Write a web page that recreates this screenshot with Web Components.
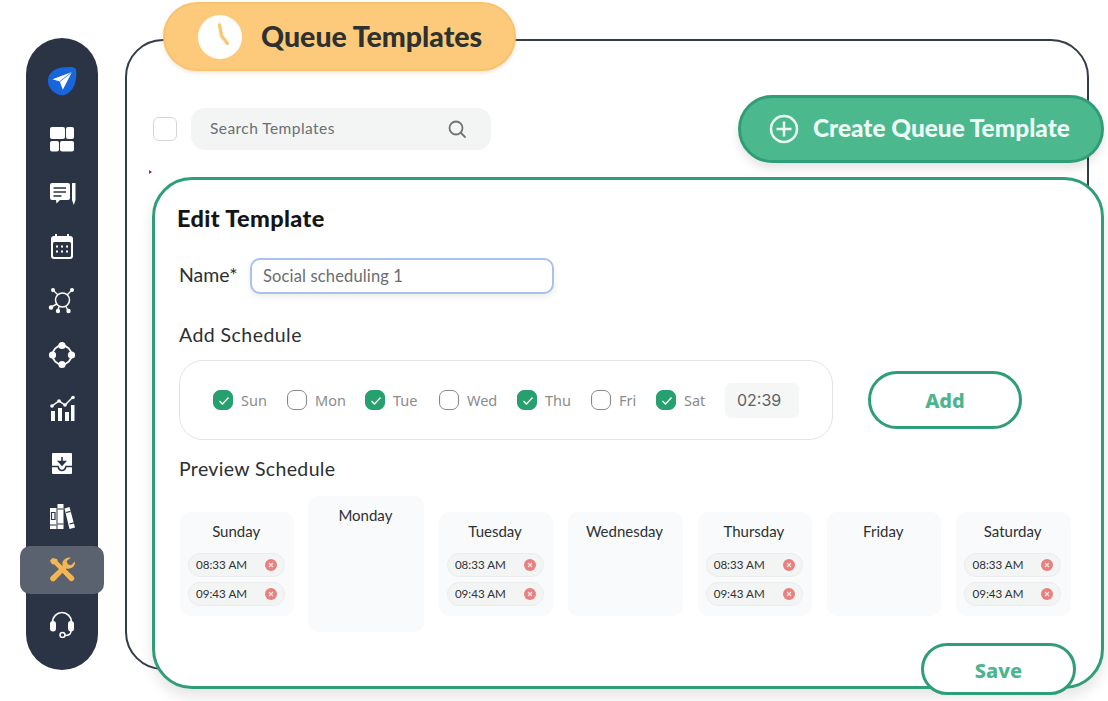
<!DOCTYPE html>
<html lang="en"><head><meta charset="utf-8"><title>Queue Templates</title>
<style>
html,body{margin:0;padding:0;background:#fff}
body{width:1108px;height:701px;overflow:hidden;font-family:"Lato","Liberation Sans",sans-serif}
</style></head><body>
<app-shell>
  <app-sidebar slot="nav">
    <side-item lead><svg width="30" height="30" viewBox="0 0 30 30"><path d="M15 1.500C20 .8 27 .2 28.800 2.800 30 7 29.200 15 27 20 24.600 25.500 19 29.500 15 29.300 10 29 4 25 1.800 19.500.2 15.500.8 11 3 8 6 4 10 2.200 15 1.500Z" fill="#1766dc"/><path d="M25 6 5.500 13.200l7.300 2.400 3 8.200z" fill="#fff"/><path d="M25 6 12.800 15.600" stroke="#1766dc" stroke-width=".8"/></svg></side-item>
    <side-item><svg width="28" height="28" viewBox="0 0 28 28" fill="#fff"><rect x="2" y="1" width="15" height="12" rx="2"/><rect x="18" y="1" width="8" height="12" rx="2"/><rect x="2" y="15" width="9" height="10.500" rx="2"/><rect x="12" y="15" width="14" height="10.500" rx="2"/></svg></side-item>
    <side-item><svg width="28" height="28" viewBox="0 0 28 28"><path d="M4 3h16a2 2 0 0 1 2 2v13a2 2 0 0 1-2 2h-8l-3.500 3.500L8 20H4a2 2 0 0 1-2-2V5a2 2 0 0 1 2-2Z" fill="#fff"/><path d="M5.500 8h12.500M5.500 12h12.500M5.500 16h8" stroke="#2b3445" stroke-width="1.500"/><path d="M24 3h3.500v17L25.750 25 24 20z" fill="#fff"/></svg></side-item>
    <side-item><svg width="28" height="28" viewBox="0 0 28 28"><rect x="3" y="3" width="22" height="23" rx="3" fill="#fff"/><rect x="7" y="1" width="2" height="4" fill="#fff"/><rect x="19" y="1" width="2" height="4" fill="#fff"/><rect x="5" y="9" width="18" height="15" rx="1.500" fill="#2b3445"/><g fill="#fff"><rect x="8" y="12.500" width="2" height="2"/><rect x="13" y="12.500" width="2" height="2"/><rect x="18" y="12.500" width="2" height="2"/><rect x="8" y="17.500" width="2" height="2"/><rect x="13" y="17.500" width="2" height="2"/><rect x="18" y="17.500" width="2" height="2"/></g></svg></side-item>
    <side-item><svg width="28" height="28" viewBox="0 0 28 28" fill="#fff" stroke="#fff"><circle cx="14.500" cy="13" r="7" fill="none" stroke-width="1.500"/><path d="M5 3l5 5M24 3l-5 5M3 20l6-3M11 19.500l-1 3.500M18 19.500l2 4" fill="none" stroke-width="1.400"/><g stroke="none"><circle cx="5" cy="3" r="2"/><circle cx="24" cy="3" r="2"/><circle cx="3" cy="20.500" r="2.200"/><circle cx="10" cy="24" r="2.200"/><circle cx="20.500" cy="24" r="2.200"/></g></svg></side-item>
    <side-item><svg width="28" height="28" viewBox="0 0 28 28" fill="#fff" style="margin-top:-1px"><circle cx="14" cy="14" r="9.500" fill="none" stroke="#fff" stroke-width="1.800"/><circle cx="14" cy="4.500" r="3.600"/><circle cx="4.500" cy="14" r="3.600"/><circle cx="23.500" cy="14" r="3.600"/><circle cx="14" cy="23.500" r="3.600"/></svg></side-item>
    <side-item><svg width="28" height="28" viewBox="0 0 28 28" fill="#fff"><rect x="3" y="16" width="4" height="10"/><rect x="10" y="13" width="4" height="13"/><rect x="17" y="17" width="4" height="9"/><rect x="23" y="10" width="3.500" height="16"/><path d="M4 11l7-5 6 4 8-8" fill="none" stroke="#fff" stroke-width="1.500"/><circle cx="4" cy="11" r="1.800"/><circle cx="11" cy="6" r="1.800"/><circle cx="17" cy="10" r="1.800"/><circle cx="25" cy="2.500" r="1.800"/></svg></side-item>
    <side-item><svg width="28" height="28" viewBox="0 0 28 28"><path d="M4 5a1 1 0 0 1 1-1h18a1 1 0 0 1 1 1v19a1 1 0 0 1-1 1H5a1 1 0 0 1-1-1z" fill="#fff"/><path d="M4 17.500h6c.8 3 2 4 4 4s3.200-1 4-4h6" fill="none" stroke="#2b3445" stroke-width="1.600"/><path d="M14 8v7M10.800 12.500 14 16l3.200-3.500z" stroke="#2b3445" stroke-width="1.600" fill="#2b3445"/></svg></side-item>
    <side-item><svg width="28" height="28" viewBox="0 0 28 28" fill="#fff"><rect x="2" y="6" width="6.500" height="21"/><rect x="9.500" y="2" width="6" height="25"/><path d="M16.500 6.500 21.500 5l5.500 20.500-5.500 1.500z"/><path d="M3.500 10.500h3.500v7H3.500zM2 23h6.500M9.500 7h6M9.500 22h6M18 10.500l4.500-1.200M21.500 22l4.500-1.200" fill="none" stroke="#2b3445" stroke-width="1.200"/></svg></side-item>
    <side-item active><svg width="28" height="28" viewBox="0 0 28 28" fill="#f4b654"><path d="M4.500 2 2 4.500l1.800 3.400 3 .8L21.500 24.200a2.700 2.700 0 0 0 4-3.800L10 5.800 9 3z"/><path d="M21 1.500a6.500 6.500 0 0 0-6.400 8.200L3 20.500a2.900 2.900 0 0 0 4.100 4.100L18.500 12.400A6.500 6.500 0 0 0 27 5.500l-4 3.800-3.300-1-1-3.200L22.800 1.800z"/></svg></side-item>
    <side-item><svg width="28" height="28" viewBox="0 0 28 28" style="margin-top:-1px"><path d="M4.500 15v-3a9.500 9.500 0 0 1 19 0v3" fill="none" stroke="#fff" stroke-width="1.700"/><rect x="2" y="11" width="6" height="10.500" rx="3" fill="#fff"/><rect x="20" y="11" width="6" height="10.500" rx="3" fill="#fff"/><path d="M23 21c0 3-2.500 4.500-6 4.500" fill="none" stroke="#fff" stroke-width="1.500"/><circle cx="14.500" cy="25" r="2.500" fill="#2b3445" stroke="#fff" stroke-width="1.500"/></svg></side-item>
  </app-sidebar>
  <title-pill>Queue Templates</title-pill>
  <tool-bar>
    <search-box>Search Templates</search-box>
    <create-button>Create Queue Template</create-button>
  </tool-bar>
  <edit-panel>
    <name-field value="Social scheduling 1"></name-field>
    <schedule-row>
      <day-check checked style="--w:74px">Sun</day-check><day-check style="--w:78px">Mon</day-check><day-check checked style="--w:74px">Tue</day-check><day-check style="--w:78px">Wed</day-check><day-check checked style="--w:74px">Thu</day-check><day-check style="--w:65px">Fri</day-check><day-check checked style="--w:69px">Sat</day-check>
      <time-box slot="time">02:39</time-box>
    </schedule-row>
    <preview-row>
      <day-card name="Sunday"><time-chip>08:33 AM</time-chip><time-chip>09:43 AM</time-chip></day-card>
      <day-card name="Monday" tall></day-card>
      <day-card name="Tuesday"><time-chip>08:33 AM</time-chip><time-chip>09:43 AM</time-chip></day-card>
      <day-card name="Wednesday"></day-card>
      <day-card name="Thursday"><time-chip>08:33 AM</time-chip><time-chip>09:43 AM</time-chip></day-card>
      <day-card name="Friday"></day-card>
      <day-card name="Saturday"><time-chip>08:33 AM</time-chip><time-chip>09:43 AM</time-chip></day-card>
    </preview-row>
  </edit-panel>
</app-shell>
<script>
function def(name, css, html){
  customElements.define(name, class extends HTMLElement{
    constructor(){super();const r=this.attachShadow({mode:'open'});
      r.innerHTML='<style>'+css+'</style>'+(typeof html==='function'?html(this):html);}
  });
}
const LATO='"Lato","Liberation Sans",sans-serif', NOTO='"Noto Sans","Liberation Sans",sans-serif';
def('app-shell',`:host{display:flex;width:1108px;height:701px;box-sizing:border-box;padding-left:26px}
.main{position:relative;margin-left:54px;width:952px;display:flex;flex-direction:column;align-items:flex-start}
.frame{position:absolute;left:-27px;top:39px;width:964px;height:631px;box-sizing:border-box;border:2px solid #343b4a;border-radius:38px}
.mark{position:absolute;left:-3px;top:170px;width:0;height:0;border-left:3px solid #c4122f;border-top:2px solid transparent;border-bottom:2px solid transparent}
::slotted(title-pill),::slotted(tool-bar),::slotted(edit-panel){position:relative}`,
`<slot name="nav"></slot><div class="main"><div class="frame"></div><div class="mark"></div><slot></slot></div>`);
def('app-sidebar',`:host{display:flex;flex-direction:column;flex:none;width:72px;height:632px;margin-top:38px;box-sizing:border-box;padding-top:16px;background:#2b3445;border-radius:36px}`,`<slot></slot>`);
def('side-item',`:host{display:flex;height:53.8px;align-items:center;justify-content:center}
:host([lead]){margin-bottom:5.2px}
.b{flex:none;width:84px;height:48px;display:flex;align-items:center;justify-content:center;border-radius:10px}
:host([active]) .b{background:#5a6270}
::slotted(svg){display:block}`,`<div class="b"><slot></slot></div>`);
def('title-pill',`:host{display:flex;align-items:center;box-sizing:border-box;margin:2px 0 0 11px;width:353px;height:69px;padding-left:33px;background:#fdca7b;border:2px solid #f8c36c;border-radius:35px;box-shadow:0 2px 4px rgba(200,160,90,.25);font:900 28.500px ${LATO};color:#2e312f}
.c{width:44px;height:44px;border-radius:50%;background:#fff;margin-right:19px;flex:none}
span{padding-bottom:1px}
svg{display:block}`,`<div class="c"><svg width="44" height="44" viewBox="0 0 44 44"><path d="M21.500 10l2.200 11 5.600 7.300" fill="none" stroke="#f8c878" stroke-width="3.500" stroke-linecap="round" stroke-linejoin="round"/></svg></div><span><slot></slot></span>`);
def('tool-bar',`:host{display:flex;align-items:center;width:952px;margin-top:24px}
.cb{width:24px;height:24px;box-sizing:border-box;border:1.500px solid #d4d6d6;border-radius:6px;background:#fff;margin:0 14px 0 1px;flex:none}`,`<div class="cb"></div><slot></slot>`);
def('search-box',`:host{display:flex;align-items:center;justify-content:space-between;box-sizing:border-box;width:300px;height:42px;margin-right:247px;padding:0 24px 0 19px;background:#f3f5f5;border-radius:14px;font:400 15.500px ${LATO};color:#6b6f72;letter-spacing:.45px}
span{padding-bottom:3px}
svg{display:block}`,`<span><slot></slot></span><svg width="20" height="20" viewBox="0 0 20 20" fill="none" stroke="#6f7376" stroke-width="1.800"><circle cx="9" cy="9" r="6.500"/><path d="M14 14l4 4" stroke-linecap="round"/></svg>`);
def('create-button',`:host{display:flex;align-items:center;box-sizing:border-box;width:366px;height:68px;padding-left:28px;background:#4bb98d;border:3px solid #2f9e78;border-radius:34px;box-shadow:0 6px 10px rgba(0,0,0,.1);font:900 24.400px ${LATO};color:#ecfbf5}
span{padding-bottom:3px}
svg{display:block;margin:0 14px 1px 0}`,`<svg width="30" height="30" viewBox="0 0 30 30" fill="none" stroke="#ecfbf5" stroke-width="2.500"><circle cx="15" cy="15" r="13"/><path d="M15 7.500v15M7.500 15h15"/></svg><span><slot></slot></span>`);
def('edit-panel',`:host{display:block;box-sizing:border-box;width:952px;height:512px;margin-top:14px;padding:24px 0 0 22px;background:#fff;border:3px solid #2f9e78;border-radius:40px;box-shadow:0 8px 14px rgba(0,0,0,.1)}
h2{margin:0;font:900 23.500px/28px ${LATO};color:#151515;letter-spacing:.38px}`,
`<h2>Edit Template</h2><slot></slot>`);
def('name-field',`:host{display:flex;align-items:center;margin:26px 0 0 2px;height:36px}
.l{font:400 19.500px ${LATO};color:#2c2f31;width:71px;padding-bottom:3px}
.i{box-sizing:border-box;width:304px;height:36px;display:flex;align-items:center;padding-left:11px;border:2px solid #a9c2ea;border-radius:10px;background:#fff;box-shadow:0 3px 6px rgba(0,0,0,.08);font:400 16.500px ${LATO};color:#6a6d70;letter-spacing:.15px}`,
h=>`<span class="l">Name*</span><div class="i">${h.getAttribute('value')||''}</div>`);
def('schedule-row',`:host{display:block;margin-left:2px}
h3{margin:29px 0 13px;font:400 19.500px/24px ${LATO};color:#2c2f31;letter-spacing:.45px}
.r{display:flex;align-items:center}
.box{box-sizing:border-box;width:654px;height:80px;display:flex;align-items:center;padding-left:33px;border:1.500px solid #e2e3e3;border-radius:24px}
.add{box-sizing:border-box;width:154px;height:58px;margin-left:35px;display:flex;align-items:center;justify-content:center;border:3px solid #2f9e78;border-radius:29px;font:800 20px ${NOTO};color:#4db58e}`,
`<h3>Add Schedule</h3><div class="r"><div class="box"><slot></slot><slot name="time"></slot></div><div class="add">Add</div></div>`);
def('day-check',`:host{display:flex;align-items:center;box-sizing:border-box;width:var(--w,74px);font:400 14.500px ${NOTO};color:#8a8c8e}
.c{width:20px;height:20px;box-sizing:border-box;border-radius:7px;border:1px solid #85888a;margin-right:8px;flex:none}
:host([checked]) .c{background:#26a06f;border-color:#26a06f}
svg{display:block;margin:4px}`,
h=>`<div class="c">${h.hasAttribute('checked')?'<svg width="12" height="12" viewBox="0 0 12 12" fill="none" stroke="#fff" stroke-width="1.300"><path d="M1.500 6l3 3 6-6.500"/></svg>':''}</div><slot></slot>`);
def('time-box',`:host{display:flex;align-items:center;box-sizing:border-box;width:74px;height:35px;padding-left:12px;background:#f5f6f6;border-radius:6px;font:400 16px "Inter","Lato",sans-serif;color:#5f6264}`,`<slot></slot>`);
def('preview-row',`:host{display:block;margin-left:3px}
h3{margin:17px 0 15px -1px;font:400 19.500px/24px ${LATO};color:#2c2f31;letter-spacing:.35px}
.r{display:flex;align-items:center;height:136px;width:891px;gap:15px}
.save{box-sizing:border-box;position:absolute;right:25px;bottom:-9px;width:155px;height:52px;padding-top:2px;display:flex;align-items:center;justify-content:center;background:#fff;border:3px solid #2f9e78;border-radius:26px;font:800 20px ${NOTO};color:#4db58e}`,
`<h3>Preview Schedule</h3><div class="r"><slot></slot></div><div class="save">Save</div>`);
def('day-card',`:host{display:block;box-sizing:border-box;flex:none;width:114.400px;height:104px;padding:10px 8px 0;background:#f9fafb;border-radius:10px;font:400 15px ${LATO};color:#2e3133;text-align:center}
:host([tall]){width:116px;height:136px;margin:0 -.5px 0 -1px}
.n{line-height:18px;margin:0 0 13px -2px}
.l{display:flex;flex-direction:column;gap:5px}`,
h=>`<div class="n">${h.getAttribute('name')}</div><div class="l"><slot></slot></div>`);
def('time-chip',`:host{display:flex;align-items:center;justify-content:space-between;box-sizing:border-box;width:97px;height:24px;padding:0 7px 0 7px;background:#f3f4f4;border:1px solid #ececec;border-radius:12px;font:400 11.600px ${LATO};color:#2e3133}
span{padding-bottom:2px}
svg{display:block}`,`<span><slot></slot></span><svg width="12" height="12" viewBox="0 0 12 12"><circle cx="6" cy="6" r="6" fill="#e98080"/><path d="M4 4l4 4M8 4l-4 4" stroke="#fbe4e4" stroke-width="1.200"/></svg>`);
</script>
</body></html>
